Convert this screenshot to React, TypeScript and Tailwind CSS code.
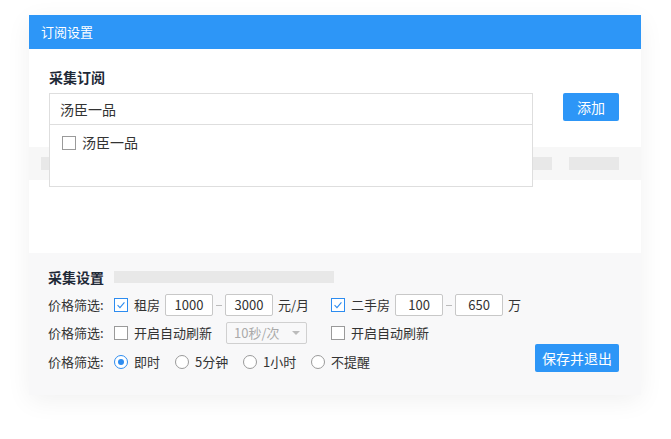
import React from 'react';

const font = { fontFamily: '"Noto Sans CJK SC", "Noto Sans", sans-serif' };

function Check({ on }: { on?: boolean }) {
  return (
    <span
      className={`flex h-[14px] w-[14px] shrink-0 items-center justify-center border bg-white ${
        on ? 'border-[#2d8cf0]' : 'border-[#9a9a9a]'
      }`}
    >
      {on && (
        <svg viewBox="0 0 14 14" className="h-[12px] w-[12px]">
          <path d="M3 7.2 L5.8 10 L11 4" fill="none" stroke="#2d8cf0" strokeWidth="1.3" />
        </svg>
      )}
    </span>
  );
}

function Radio({ on }: { on?: boolean }) {
  return (
    <span
      className={`flex h-[14px] w-[14px] shrink-0 items-center justify-center rounded-full border bg-white ${
        on ? 'border-[#2d8cf0]' : 'border-[#9a9a9a]'
      }`}
    >
      {on && <span className="h-[6px] w-[6px] rounded-full bg-[#2d8cf0]" />}
    </span>
  );
}

function NumBox({ value }: { value: string }) {
  return (
    <span className="flex h-[22px] w-[48px] items-center justify-center rounded-[2px] border border-[#c8c8c8] bg-white text-[13px] text-[#333]">
      {value}
    </span>
  );
}

function Dash() {
  return <span className="mx-[3px] h-px w-[6px] bg-[#bbb]" />;
}

export default function App() {
  return (
    <div className="min-h-screen bg-white pt-[15px] text-[#333]" style={font}>
      {/* Card */}
      <div className="ml-[29px] w-[612px] shadow-[0_6px_24px_rgba(0,0,0,0.06)]">
        <div className="flex h-[34px] items-center bg-[#2d96f7] pl-[12px] text-[13px] text-white">订阅设置</div>

        {/* 采集订阅 */}
        <div className="relative h-[98px] bg-white pl-[20px] pr-[22px] pt-[18px]">
          <div className="text-[14px] font-bold leading-[20px] text-[#1f2937]">采集订阅</div>
          <div className="mt-[6px] flex items-start justify-between">
            <div className="relative z-10 w-[484px]">
              <div className="flex h-[32px] items-center border border-[#dedede] bg-white pl-[10px] text-[14px]">
                汤臣一品
              </div>
              <div className="h-[62px] border border-t-0 border-[#dedede] bg-white pl-[12px] pt-[7px]">
                <label className="flex items-center gap-[6px] text-[14px]">
                  <Check />
                  <span>汤臣一品</span>
                </label>
              </div>
            </div>
            <button className="h-[28px] w-[56px] rounded-[2px] bg-[#2d96f7] text-[14px] text-white">添加</button>
          </div>
        </div>

        {/* skeleton band */}
        <div className="flex h-[33px] items-center gap-[17px] bg-[#f7f7f7] pl-[12px]">
          <span className="h-[13px] w-[511px] bg-[#e8e8e8]" />
          <span className="h-[13px] w-[50px] bg-[#e8e8e8]" />
        </div>
        <div className="h-[73px] bg-white" />

        {/* 采集设置 */}
        <div className="relative h-[142px] bg-[#f8f8f9] pl-[19px] pt-[14px] text-[13px]">
          <div className="flex h-[20px] items-center">
            <span className="w-[66px] text-[14px] font-bold text-[#1f2937]">采集设置</span>
            <span className="h-[12px] w-[220px] bg-[#e8e8e8]" />
          </div>

          <div className="mt-[7px] flex h-[22px] items-center">
            <span className="w-[66px]">价格筛选:</span>
            <Check on />
            <span className="ml-[6px] mr-[5px]">租房</span>
            <NumBox value="1000" />
            <Dash />
            <NumBox value="3000" />
            <span className="ml-[5px] w-[53px]">元/月</span>
            <Check on />
            <span className="ml-[6px] mr-[5px]">二手房</span>
            <NumBox value="100" />
            <Dash />
            <NumBox value="650" />
            <span className="ml-[5px]">万</span>
          </div>

          <div className="mt-[6px] flex h-[22px] items-center">
            <span className="w-[66px]">价格筛选:</span>
            <Check />
            <span className="ml-[6px] w-[92px]">开启自动刷新</span>
            <span className="flex h-[22px] w-[81px] items-center justify-between rounded-[2px] border border-[#d0d0d0] pl-[7px] pr-[6px] text-[#aaa]">
              10秒/次
              <svg viewBox="0 0 8 4" className="h-[4px] w-[8px]">
                <path d="M0 0 L8 0 L4 4 Z" fill="#bbb" />
              </svg>
            </span>
            <span className="ml-[24px]">
              <Check />
            </span>
            <span className="ml-[6px]">开启自动刷新</span>
          </div>

          <div className="mt-[7px] flex h-[22px] items-center">
            <span className="w-[66px]">价格筛选:</span>
            <Radio on />
            <span className="ml-[6px] w-[41px]">即时</span>
            <Radio />
            <span className="ml-[6px] w-[48px]">5分钟</span>
            <Radio />
            <span className="ml-[6px] w-[48px]">1小时</span>
            <Radio />
            <span className="ml-[6px]">不提醒</span>
          </div>

          <button className="absolute right-[22px] top-[91px] h-[28px] w-[84px] rounded-[2px] bg-[#2d96f7] text-[14px] text-white">
            保存并退出
          </button>
        </div>
      </div>
    </div>
  );
}
